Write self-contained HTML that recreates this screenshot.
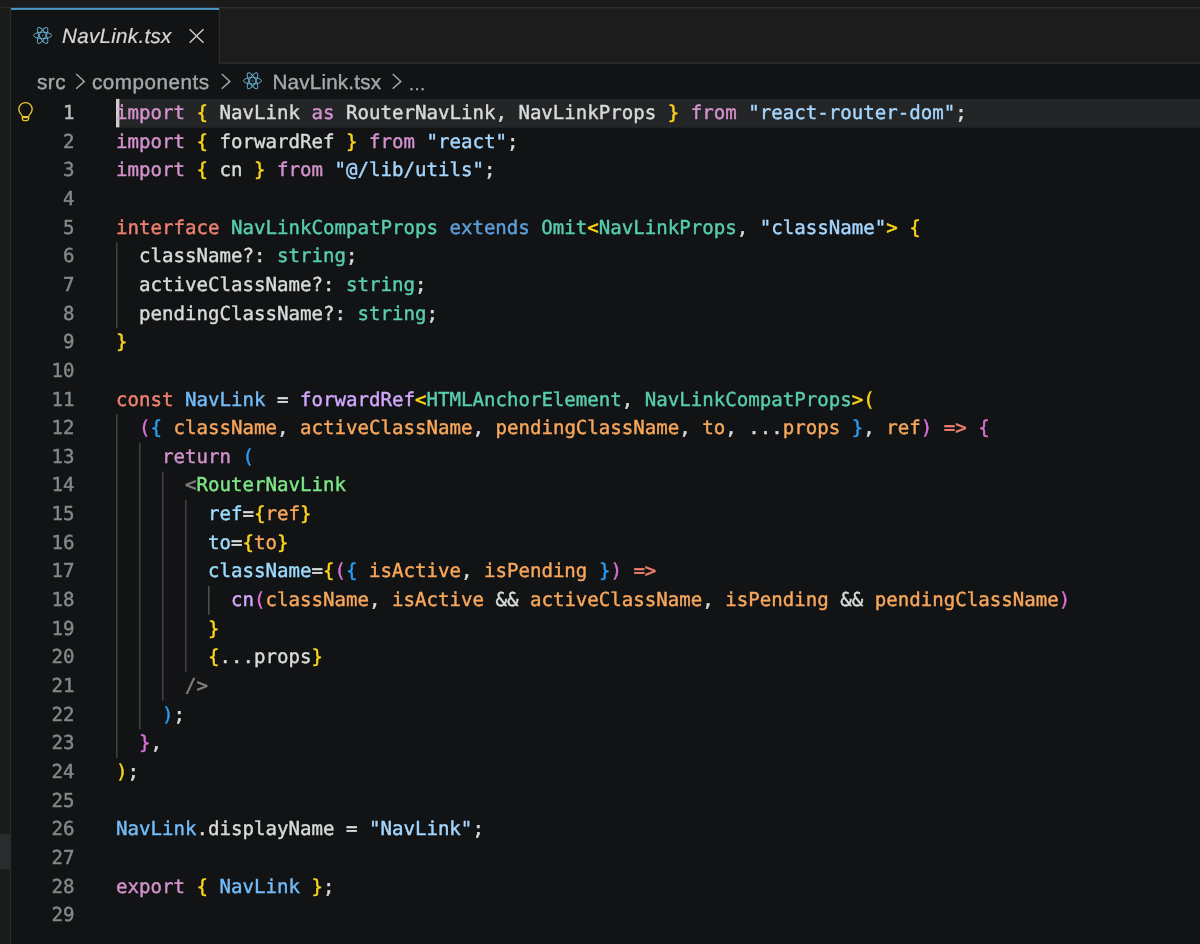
<!DOCTYPE html><html lang="en"><head><meta charset="utf-8"><title>NavLink.tsx</title><style>
*{margin:0;padding:0;box-sizing:border-box}
html,body{width:1200px;height:944px;overflow:hidden;background:#121314}
body{position:relative;font-family:"Liberation Sans",sans-serif;-webkit-font-smoothing:antialiased;text-rendering:geometricPrecision}
#w{position:absolute;left:0;top:0;width:1200px;height:944px;overflow:hidden;will-change:transform}
.abs{position:absolute}
.ln,.cl{position:absolute;height:28.652px;line-height:28.652px;font-family:"DejaVu Sans Mono", "Liberation Mono", monospace;font-size:19.101px;white-space:pre;letter-spacing:0;-webkit-text-stroke:0.42px currentColor}
.ln{left:30px;width:44.6px;text-align:right;color:#858889}
.cl{left:116.0px;color:#d8dadb}
.kw{color:#d292cc}
.st{color:#ee8070}
.ty{color:#58cdb0}
.ex{color:#5c9fdc}
.s{color:#a5d6ff}
.w{color:#d8dadb}
.v{color:#72bcf9}
.f{color:#d2a8ff}
.p{color:#f7a75c}
.a{color:#9cdcfe}
.tag{color:#7ee787}
.g{color:#808080}
.b1{color:#fbd51a}
.b2{color:#da70d6}
.b3{color:#2a9df2}
.op{color:#d8dadb}
</style></head><body><div id="w">
<svg class="abs" style="left:0;top:0" width="1200" height="944" viewBox="0 0 1200 944"><rect x="0.00" y="0.00" width="1200.00" height="8.00" fill="#1b1b1c"/><rect x="0.00" y="7.60" width="10.00" height="944.00" fill="#1a1b1b"/><rect x="0.00" y="6.90" width="11.00" height="1.20" fill="#262728"/><rect x="9.80" y="8.00" width="1.30" height="944.00" fill="#2c2d2e"/><rect x="0.00" y="834.00" width="9.80" height="35.50" fill="#2b2c2d"/><rect x="219.00" y="6.80" width="981.00" height="57.00" fill="#1c1c1c"/><rect x="219.00" y="6.80" width="981.00" height="1.60" fill="#2c2d2e"/><rect x="219.00" y="62.10" width="981.00" height="1.70" fill="#2b2c2d"/><rect x="218.60" y="8.00" width="1.40" height="55.80" fill="#2a2b2c"/><rect x="11.00" y="7.80" width="208.00" height="2.10" fill="#4a97c1"/><rect x="116.00" y="99.00" width="1084.00" height="28.80" fill="#242526"/><rect x="116.00" y="98.90" width="3.40" height="28.40" fill="#cccccc"/><rect x="116.00" y="242.26" width="1.60" height="85.96" fill="#3f4041"/><rect x="116.00" y="414.17" width="1.60" height="343.82" fill="#3f4041"/><rect x="139.00" y="442.82" width="1.60" height="286.52" fill="#3f4041"/><rect x="162.00" y="471.48" width="1.60" height="229.22" fill="#3f4041"/><rect x="185.00" y="500.13" width="1.60" height="171.91" fill="#3f4041"/><rect x="208.00" y="586.08" width="1.60" height="28.65" fill="#4c4e4f"/><g transform="translate(42.6 35.4)" fill="none" stroke="#66abc9" stroke-width="1.0"><ellipse rx="9.0" ry="3.25"/><ellipse rx="9.0" ry="3.25" transform="rotate(60)"/><ellipse rx="9.0" ry="3.25" transform="rotate(120)"/><circle r="1.0" fill="#3a5866" stroke="none"/></g><g transform="translate(252.5 80.8)" fill="none" stroke="#66abc9" stroke-width="1.0"><ellipse rx="9.0" ry="3.25"/><ellipse rx="9.0" ry="3.25" transform="rotate(60)"/><ellipse rx="9.0" ry="3.25" transform="rotate(120)"/><circle r="1.0" fill="#3a5866" stroke="none"/></g><path d="M189.65 29.35L203.45 42.65M203.45 29.35L189.65 42.65" stroke="#d0d0d0" stroke-width="1.4" fill="none"/><path d="M76.20 74.0L84.30 81.4L76.20 88.8" stroke="#a3a6a7" stroke-width="1.45" fill="none"/><path d="M221.80 74.0L229.90 81.4L221.80 88.8" stroke="#a3a6a7" stroke-width="1.45" fill="none"/><path d="M392.70 74.0L400.80 81.4L392.70 88.8" stroke="#a3a6a7" stroke-width="1.45" fill="none"/><g transform="translate(10 95)" fill="none" stroke="#ecc32c" stroke-width="1.25" stroke-linecap="round" stroke-linejoin="round"><path d="M9.7 17.4A6.65 6.5 0 1 1 21.3 17.4C20.5 18.9 18.8 19.8 18.7 21.6V23.5A2.1 2.1 0 0 1 16.6 25.6H14.4A2.1 2.1 0 0 1 12.3 23.5V21.6C12.2 19.8 10.5 18.9 9.7 17.4ZM12.5 21.6H18.5M12.9 22.5H18.1"/></g></svg>
<div class="abs" style="left:62px;top:23px;height:28px;line-height:28px;font-size:20.6px;letter-spacing:0.29px;font-style:italic;color:#d6d6d6;white-space:pre;-webkit-text-stroke:0.2px currentColor">NavLink.tsx</div>
<div class="abs" style="left:37px;color:#a6a9aa;font-size:20.6px;letter-spacing:0.55px;height:28px;line-height:28px;top:69px;white-space:pre;-webkit-text-stroke:0.4px currentColor">src</div>
<div class="abs" style="left:92px;color:#a6a9aa;font-size:20.6px;letter-spacing:0.55px;height:28px;line-height:28px;top:69px;white-space:pre;-webkit-text-stroke:0.4px currentColor">components</div>
<div class="abs" style="left:272.5px;color:#a6a9aa;font-size:20.6px;letter-spacing:0.55px;height:28px;line-height:28px;top:69px;white-space:pre;-webkit-text-stroke:0.4px currentColor;letter-spacing:0.2px">NavLink.tsx</div>
<div class="abs" style="left:408.3px;color:#a6a9aa;font-size:20.6px;letter-spacing:0.55px;height:28px;line-height:28px;top:69px;white-space:pre;-webkit-text-stroke:0.4px currentColor;letter-spacing:0;font-size:17.6px;top:70px">…</div>
<div class="ln" style="top:99.00px;color:#bbbebf">1</div>
<div class="cl" style="top:99.00px"><span class="kw">import</span> <span class="b1">{</span> NavLink <span class="kw">as</span> RouterNavLink, NavLinkProps <span class="b1">}</span> <span class="kw">from</span> <span class="s">"react-router-dom"</span>;</div>
<div class="ln" style="top:127.65px;color:#858889">2</div>
<div class="cl" style="top:127.65px"><span class="kw">import</span> <span class="b1">{</span> forwardRef <span class="b1">}</span> <span class="kw">from</span> <span class="s">"react"</span>;</div>
<div class="ln" style="top:156.30px;color:#858889">3</div>
<div class="cl" style="top:156.30px"><span class="kw">import</span> <span class="b1">{</span> cn <span class="b1">}</span> <span class="kw">from</span> <span class="s">"@/lib/utils"</span>;</div>
<div class="ln" style="top:184.96px;color:#858889">4</div>
<div class="ln" style="top:213.61px;color:#858889">5</div>
<div class="cl" style="top:213.61px"><span class="st">interface</span> <span class="ty">NavLinkCompatProps</span> <span class="ex">extends</span> <span class="ty">Omit</span><span class="b1">&lt;</span><span class="ty">NavLinkProps</span>, <span class="s">"className"</span><span class="b1">&gt;</span> <span class="b1">{</span></div>
<div class="ln" style="top:242.26px;color:#858889">6</div>
<div class="cl" style="top:242.26px">  className?: <span class="ty">string</span>;</div>
<div class="ln" style="top:270.91px;color:#858889">7</div>
<div class="cl" style="top:270.91px">  activeClassName?: <span class="ty">string</span>;</div>
<div class="ln" style="top:299.56px;color:#858889">8</div>
<div class="cl" style="top:299.56px">  pendingClassName?: <span class="ty">string</span>;</div>
<div class="ln" style="top:328.22px;color:#858889">9</div>
<div class="cl" style="top:328.22px"><span class="b1">}</span></div>
<div class="ln" style="top:356.87px;color:#858889">10</div>
<div class="ln" style="top:385.52px;color:#858889">11</div>
<div class="cl" style="top:385.52px"><span class="st">const</span> <span class="v">NavLink</span> = <span class="f">forwardRef</span><span class="b1">&lt;</span><span class="ty">HTMLAnchorElement</span>, <span class="ty">NavLinkCompatProps</span><span class="b1">&gt;</span><span class="b1">(</span></div>
<div class="ln" style="top:414.17px;color:#858889">12</div>
<div class="cl" style="top:414.17px">  <span class="b2">(</span><span class="b3">{</span> <span class="p">className</span>, <span class="p">activeClassName</span>, <span class="p">pendingClassName</span>, <span class="p">to</span>, ...<span class="p">props</span> <span class="b3">}</span>, <span class="p">ref</span><span class="b2">)</span> <span class="st">=&gt;</span> <span class="b2">{</span></div>
<div class="ln" style="top:442.82px;color:#858889">13</div>
<div class="cl" style="top:442.82px">    <span class="kw">return</span> <span class="b3">(</span></div>
<div class="ln" style="top:471.48px;color:#858889">14</div>
<div class="cl" style="top:471.48px">      <span class="g">&lt;</span><span class="tag">RouterNavLink</span></div>
<div class="ln" style="top:500.13px;color:#858889">15</div>
<div class="cl" style="top:500.13px">        <span class="a">ref</span>=<span class="b1">{</span><span class="p">ref</span><span class="b1">}</span></div>
<div class="ln" style="top:528.78px;color:#858889">16</div>
<div class="cl" style="top:528.78px">        <span class="a">to</span>=<span class="b1">{</span><span class="p">to</span><span class="b1">}</span></div>
<div class="ln" style="top:557.43px;color:#858889">17</div>
<div class="cl" style="top:557.43px">        <span class="a">className</span>=<span class="b1">{</span><span class="b2">(</span><span class="b3">{</span> <span class="p">isActive</span>, <span class="p">isPending</span> <span class="b3">}</span><span class="b2">)</span> <span class="st">=&gt;</span></div>
<div class="ln" style="top:586.08px;color:#858889">18</div>
<div class="cl" style="top:586.08px">          <span class="f">cn</span><span class="b2">(</span><span class="p">className</span>, <span class="p">isActive</span> &amp;&amp; <span class="p">activeClassName</span>, <span class="p">isPending</span> &amp;&amp; <span class="p">pendingClassName</span><span class="b2">)</span></div>
<div class="ln" style="top:614.74px;color:#858889">19</div>
<div class="cl" style="top:614.74px">        <span class="b1">}</span></div>
<div class="ln" style="top:643.39px;color:#858889">20</div>
<div class="cl" style="top:643.39px">        <span class="b1">{</span>...props<span class="b1">}</span></div>
<div class="ln" style="top:672.04px;color:#858889">21</div>
<div class="cl" style="top:672.04px">      <span class="g">/&gt;</span></div>
<div class="ln" style="top:700.69px;color:#858889">22</div>
<div class="cl" style="top:700.69px">    <span class="b3">)</span>;</div>
<div class="ln" style="top:729.34px;color:#858889">23</div>
<div class="cl" style="top:729.34px">  <span class="b2">}</span>,</div>
<div class="ln" style="top:758.00px;color:#858889">24</div>
<div class="cl" style="top:758.00px"><span class="b1">)</span>;</div>
<div class="ln" style="top:786.65px;color:#858889">25</div>
<div class="ln" style="top:815.30px;color:#858889">26</div>
<div class="cl" style="top:815.30px"><span class="v">NavLink</span>.displayName = <span class="s">"NavLink"</span>;</div>
<div class="ln" style="top:843.95px;color:#858889">27</div>
<div class="ln" style="top:872.60px;color:#858889">28</div>
<div class="cl" style="top:872.60px"><span class="kw">export</span> <span class="b1">{</span> <span class="v">NavLink</span> <span class="b1">}</span>;</div>
<div class="ln" style="top:901.26px;color:#858889">29</div>
</div></body></html>
